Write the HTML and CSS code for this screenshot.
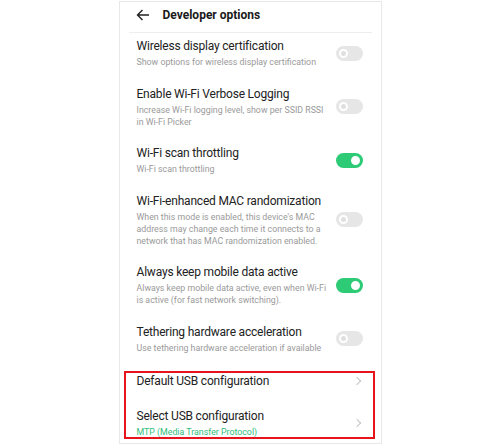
FILE: index.html
```html
<!DOCTYPE html>
<html lang="en">
<head>
  <meta charset="UTF-8">
  <meta name="viewport" content="width=device-width, initial-scale=1.0">
  <title>Developer options</title>
  <link rel="stylesheet" href="styles.css">
</head>
<body>
  <div class="screen">
    <div class="header">
      <svg class="back" width="14" height="12" viewBox="0 0 14 12">
        <path d="M13 6H1.5M6.5 1L1.5 6l5 5" fill="none" stroke="#222" stroke-width="1.4"/>
      </svg>
      <span class="page-title">Developer options</span>
    </div>

    <div class="list">
      <div class="row">
        <div class="text">
          <div class="title">Wireless display certification</div>
          <div class="sub">Show options for wireless display certification</div>
        </div>
        <span class="toggle"></span>
      </div>

      <div class="row">
        <div class="text">
          <div class="title">Enable Wi-Fi Verbose Logging</div>
          <div class="sub">Increase Wi-Fi logging level, show per SSID RSSI in Wi-Fi Picker</div>
        </div>
        <span class="toggle"></span>
      </div>

      <div class="row">
        <div class="text">
          <div class="title">Wi-Fi scan throttling</div>
          <div class="sub">Wi-Fi scan throttling</div>
        </div>
        <span class="toggle on"></span>
      </div>

      <div class="row">
        <div class="text">
          <div class="title">Wi-Fi-enhanced MAC randomization</div>
          <div class="sub">When this mode is enabled, this device's MAC address may change each time it connects to a network that has MAC randomization enabled.</div>
        </div>
        <span class="toggle"></span>
      </div>

      <div class="row">
        <div class="text">
          <div class="title">Always keep mobile data active</div>
          <div class="sub">Always keep mobile data active, even when Wi-Fi is active (for fast network switching).</div>
        </div>
        <span class="toggle on"></span>
      </div>

      <div class="row">
        <div class="text">
          <div class="title">Tethering hardware acceleration</div>
          <div class="sub">Use tethering hardware acceleration if available</div>
        </div>
        <span class="toggle"></span>
      </div>

      <div class="row link">
        <div class="text">
          <div class="title">Default USB configuration</div>
        </div>
        <span class="chevron"></span>
      </div>

      <div class="row link">
        <div class="text">
          <div class="title">Select USB configuration</div>
          <div class="sub value">MTP (Media Transfer Protocol)</div>
        </div>
        <span class="chevron"></span>
      </div>
    </div>

    <div class="highlight"></div>
  </div>
</body>
</html>
```

FILE: styles.css
```css
body {
  margin: 0;
  background: #fff;
  font-family: Roboto, "Noto Sans", Arial, sans-serif;
  display: flex;
  justify-content: center;
}
.screen {
  position: relative;
  width: 261px;
  height: 441px;
  margin-top: 1px;
  border: 1px solid #e8e8e8;
  overflow: hidden;
}
.header {
  display: flex;
  align-items: center;
  height: 25px;
  margin: 0 9px;
  padding: 0 0 5px 7px;
  border-bottom: 1px solid #eeeeee;
}
.back {
  margin-right: 13px;
}
.page-title {
  font-size: 12px;
  font-weight: bold;
  color: #1a1a1a;
}
.list {
  display: flex;
  flex-direction: column;
  gap: 17.5px;
  padding: 5px 18px 0 17px;
}
.row {
  display: flex;
  align-items: center;
  justify-content: space-between;
}
.row.link {
  padding-top: 1.5px;
}
.text {
  width: 192px;
}
.title {
  font-size: 12px;
  line-height: 16px;
  letter-spacing: -0.2px;
  color: #222;
}
.sub {
  margin-top: 2px;
  font-size: 8.8px;
  line-height: 12px;
  color: #9a9a9a;
}
.sub.value {
  color: #2fc07a;
}
.toggle {
  position: relative;
  width: 27px;
  height: 15px;
  border-radius: 8px;
  background: #e6e6e6;
  flex-shrink: 0;
}
.toggle::after {
  content: "";
  position: absolute;
  left: 3px;
  top: 3px;
  width: 5px;
  height: 5px;
  border: 2px solid #fff;
  border-radius: 50%;
  background: #e0e0e0;
}
.toggle.on {
  background: #2ecb77;
}
.toggle.on::after {
  left: auto;
  right: 3px;
  background: #fff;
}
.chevron {
  width: 5px;
  height: 5px;
  margin-right: 3px;
  border-top: 1px solid #c4c4c4;
  border-right: 1px solid #c4c4c4;
  transform: rotate(45deg);
}
.highlight {
  position: absolute;
  left: 4px;
  top: 369px;
  width: 247px;
  height: 64px;
  border: 2px solid #e8141c;
}
```
